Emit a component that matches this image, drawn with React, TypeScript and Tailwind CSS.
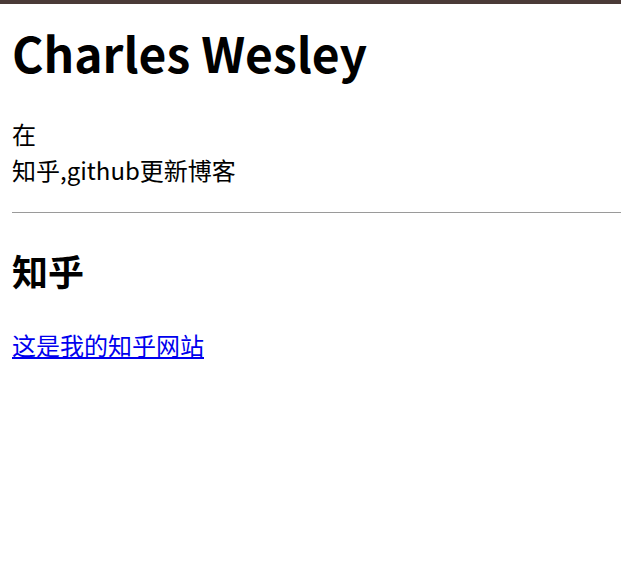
export default function App() {
  return (
    <div
      className="min-h-[570px] border-t-4 border-[#4a3a37] bg-white pl-3 pt-px text-[24px] text-black"
      style={{ fontFamily: '"Noto Sans CJK SC", "Noto Sans", sans-serif' }}
    >
      <h1 className="mb-[28px] mt-[11px] text-[48px] font-bold leading-normal">Charles Wesley</h1>
      <p className="my-[24px] leading-normal">
        在
        <br />
        知乎,github更新博客
      </p>
      <hr className="border-0 border-t border-[#9a9a9a]" />
      <h2 className="my-[30px] text-[36px] font-bold leading-normal">知乎</h2>
      <p className="my-[24px] leading-normal">
        <a href="#" className="text-[#0000ee] underline">
          这是我的知乎网站
        </a>
      </p>
    </div>
  );
}
